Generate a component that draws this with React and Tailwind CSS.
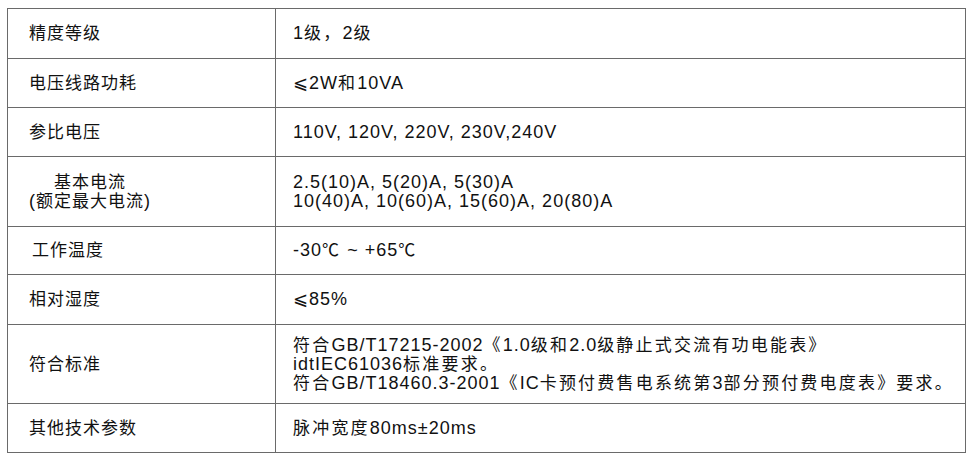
import React from "react";

// CJK runs are a touch smaller than the Latin text in the original sheet
const CJK = /([\u2103\u3000-\u303f\u4e00-\u9fff\uff00-\uffef]+)/;

function T({ children, wide = false }) {
  return children.split(CJK).map((part, i) =>
    CJK.test(part) ? (
      <span
        key={i}
        className={wide ? "text-[17px] tracking-[2.2px]" : "text-[17px]"}
      >
        {part}
      </span>
    ) : (
      part
    )
  );
}

const rows = [
  { h: "h-[49px]", label: "精度等级", value: ["1级，2级"] },
  { h: "h-[49px]", label: "电压线路功耗", value: ["⩽2W和10VA"] },
  { h: "h-[49px]", label: "参比电压", value: ["110V, 120V, 220V, 230V,240V"] },
  {
    h: "h-[70px]",
    label: (
      <div className="flex flex-col items-center w-max">
        <span><T>基本电流</T></span>
        <span><T>(额定最大电流)</T></span>
      </div>
    ),
    value: ["2.5(10)A, 5(20)A, 5(30)A", "10(40)A, 10(60)A, 15(60)A, 20(80)A"],
  },
  {
    h: "h-[48px]",
    label: <span className="pl-[3px]"><T>工作温度</T></span>,
    value: ["-30℃ ~ +65℃"],
  },
  { h: "h-[50px]", label: "相对湿度", value: ["⩽85%"] },
  {
    h: "h-[79px]",
    label: "符合标准",
    value: [
      "符合GB/T17215-2002《1.0级和2.0级静止式交流有功电能表》",
      "idtIEC61036标准要求。",
      "符合GB/T18460.3-2001《IC卡预付费售电系统第3部分预付费电度表》要求。",
    ],
  },
  { h: "h-[49px]", label: "其他技术参数", value: ["脉冲宽度80ms±20ms"] },
];

export default function App() {
  return (
    <div
      className="w-[972px] h-[460px] bg-white pt-[8px] pl-[7px] text-[#111] text-[18px] tracking-[1px] leading-[19px]"
      style={{ fontFamily: '"Liberation Sans", "Noto Sans CJK SC", sans-serif' }}
    >
      <div className="w-[959px] border border-[#6a6a6a]">
        {rows.map((r, i) => (
          <div
            key={i}
            className={`flex ${r.h} ${i > 0 ? "border-t border-[#6a6a6a]" : ""}`}
          >
            <div className="w-[267px] shrink-0 flex items-center pl-[21px]">
              {typeof r.label === "string" ? <T>{r.label}</T> : r.label}
            </div>
            <div className="flex-1 border-l border-[#6a6a6a] flex flex-col justify-center pl-[17px]">
              {r.value.map((v, j) => (
                <div key={j} className="whitespace-nowrap">
                  <T wide>{v}</T>
                </div>
              ))}
            </div>
          </div>
        ))}
      </div>
    </div>
  );
}
